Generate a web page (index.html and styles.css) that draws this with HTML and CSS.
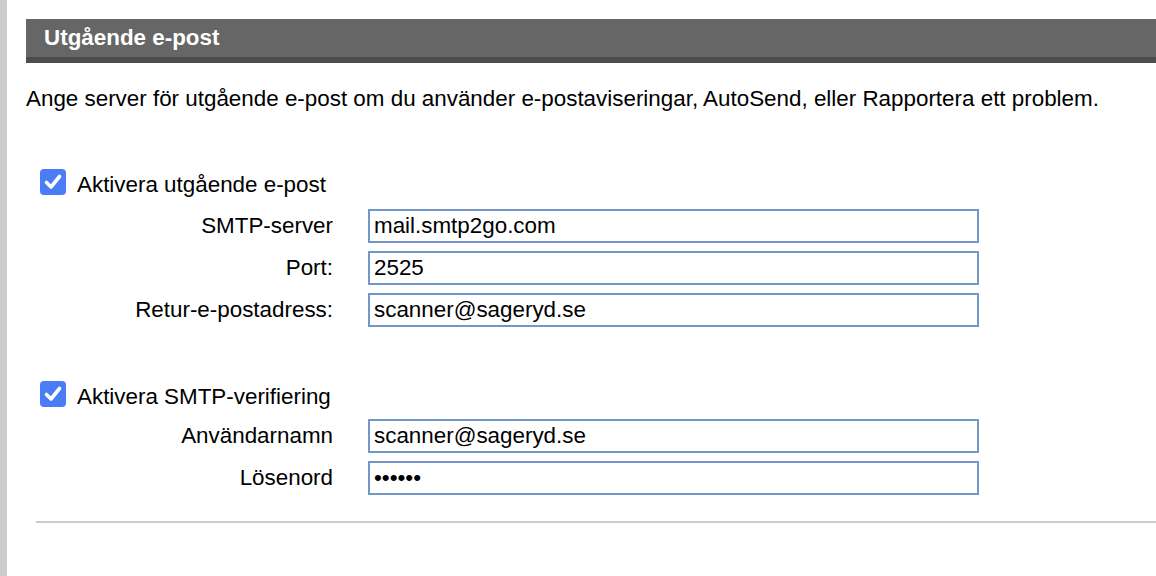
FILE: index.html
```html
<!DOCTYPE html>
<html lang="sv">
<head>
<meta charset="utf-8">
<title>Utgående e-post</title>
<link rel="stylesheet" href="styles.css">
</head>
<body>
<div class="sidebar"></div>
<main class="content">
  <h2 class="section-title">Utgående e-post</h2>
  <p class="intro">Ange server för utgående e-post om du använder e-postaviseringar, AutoSend, eller Rapportera ett problem.</p>

  <section class="group first">
    <label class="check-row">
      <span class="checkbox"><svg viewBox="0 0 26 26" width="26" height="26"><path d="M6.5 13.5 L11 18 L19.5 7.5" fill="none" stroke="#fff" stroke-width="3.6" stroke-linecap="round" stroke-linejoin="round"/></svg></span>
      <span class="check-label">Aktivera utgående e-post</span>
    </label>
    <div class="fields">
      <span class="field-label">SMTP-server</span>
      <input class="field-input" type="text" value="mail.smtp2go.com">
      <span class="field-label">Port:</span>
      <input class="field-input" type="text" value="2525">
      <span class="field-label">Retur-e-postadress:</span>
      <input class="field-input" type="text" value="scanner@sageryd.se">
    </div>
  </section>

  <section class="group second">
    <label class="check-row">
      <span class="checkbox"><svg viewBox="0 0 26 26" width="26" height="26"><path d="M6.5 13.5 L11 18 L19.5 7.5" fill="none" stroke="#fff" stroke-width="3.6" stroke-linecap="round" stroke-linejoin="round"/></svg></span>
      <span class="check-label">Aktivera SMTP-verifiering</span>
    </label>
    <div class="fields">
      <span class="field-label">Användarnamn</span>
      <input class="field-input" type="text" value="scanner@sageryd.se">
      <span class="field-label">Lösenord</span>
      <input class="field-input" type="password" value="secret">
    </div>
  </section>

  <hr class="divider">
</main>
</body>
</html>
```

FILE: styles.css
```css
html, body {
  margin: 0;
  padding: 0;
  background: #fff;
  height: 100%;
  overflow: hidden;
}

body {
  display: flex;
  font-family: "Liberation Sans", Arial, sans-serif;
  font-size: 22.4px;
  color: #000;
}

.sidebar {
  width: 7px;
  flex: 0 0 7px;
  background: #cccccc;
  height: 100vh;
}

.content {
  flex: 1;
  padding-left: 19px;
  padding-top: 19px;
}

.section-title {
  margin: 0;
  height: 38px;
  line-height: 38px;
  background: #666666;
  border-bottom: 6px solid #4d4d4d;
  color: #fff;
  font-size: 22.4px;
  font-weight: bold;
  padding-left: 18px;
}

.intro {
  margin: 23px 0 0 0;
  line-height: 25px;
  font-size: 22.4px;
}

.group.first {
  margin-top: 58px;
}

.group.second {
  margin-top: 54px;
}

.check-row {
  display: flex;
  align-items: center;
  margin-left: 14px;
  height: 26px;
}

.checkbox {
  width: 26px;
  height: 26px;
  border-radius: 4px;
  background: #4a7cf6;
  display: inline-flex;
}

.check-label {
  margin-left: 11px;
  padding-top: 5px;
}

.fields {
  display: grid;
  grid-template-columns: 307px 611px;
  column-gap: 35px;
  row-gap: 8px;
  margin-top: 14px;
}

.group.second .fields {
  margin-top: 12px;
}

.field-label {
  text-align: right;
  line-height: 34px;
}

.field-input {
  box-sizing: border-box;
  height: 34px;
  width: 611px;
  margin: 0;
  border: 2px solid #7397c9;
  border-radius: 0;
  padding: 0 4px;
  font-family: "Liberation Sans", Arial, sans-serif;
  font-size: 22.4px;
  color: #000;
  outline: none;
}

.divider {
  margin: 26px 0 0 10px;
  border: 0;
  height: 2px;
  background: #cccccc;
}
```
